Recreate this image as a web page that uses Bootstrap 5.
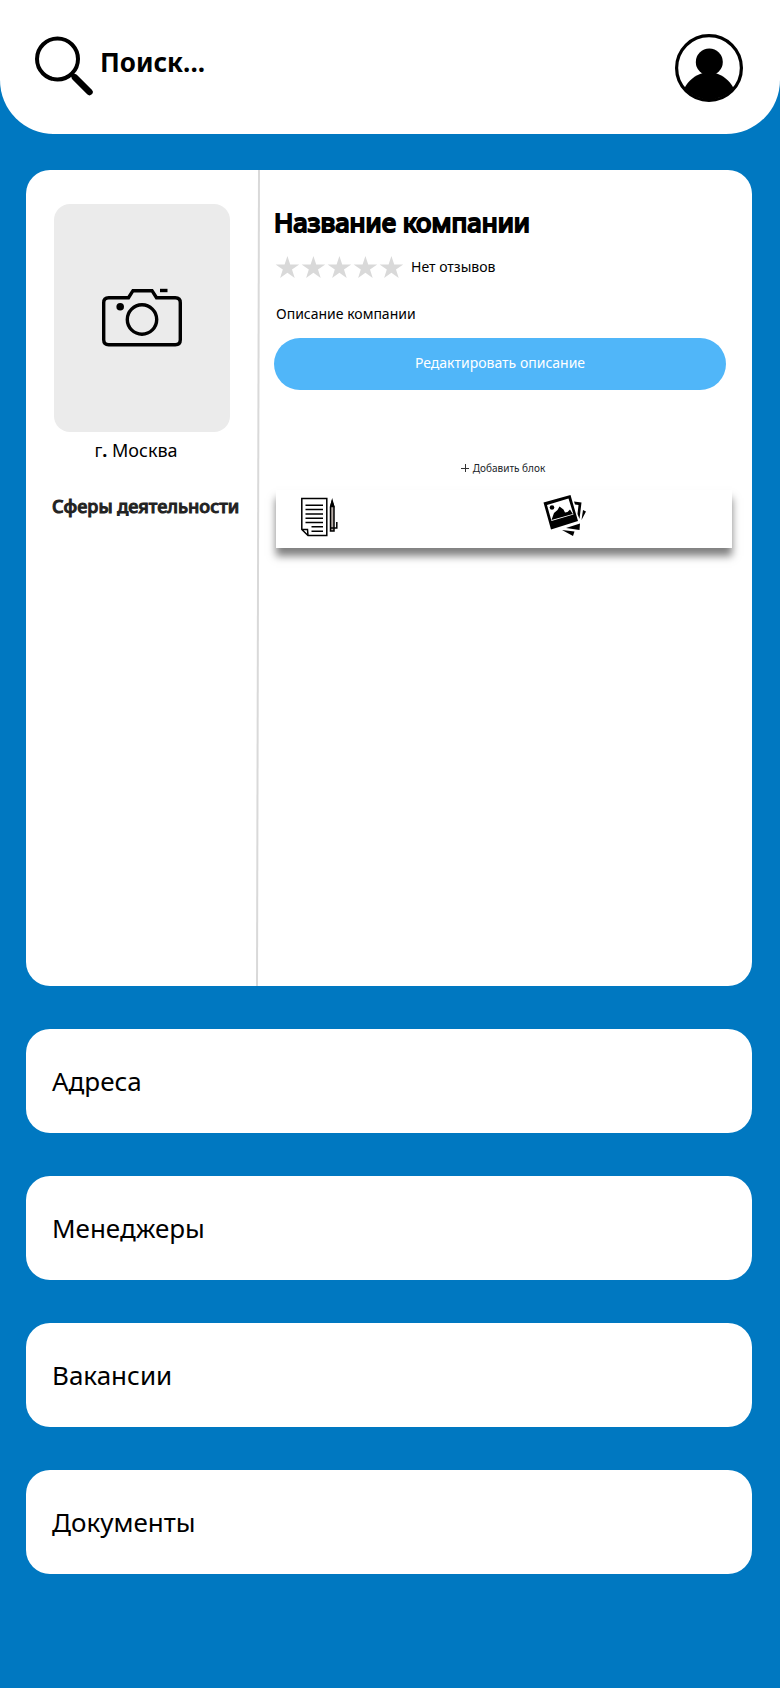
<!DOCTYPE html>
<html lang="ru">
<head>
<meta charset="utf-8">
<meta name="viewport" content="width=device-width, initial-scale=1">
<title>Профиль компании</title>
<link href="https://cdn.jsdelivr.net/npm/bootstrap@5.3.0/dist/css/bootstrap.min.css" rel="stylesheet">
<style>
body { background: #0078c1; color: #000; font-family: "Noto Sans", sans-serif; font-size: 14px; line-height: 20px; }
.top-bar { border-radius: 0 0 54px 54px; padding: 34px 37px 32px 34px; }
.search-input, .search-input:focus { font-size: 26px; line-height: 36px; font-weight: 700; color: #000; background: transparent; box-shadow: none; }
.search-input::placeholder { color: #000; opacity: 1; }
.search-form { gap: 6px; }
.page-body { padding: 36px 28px 114px 26px; }
.stack { gap: 43px; }
.panel { border-radius: 24px; }
.profile { min-height: 816px; }
.side { flex: 0 0 230px; padding: 34px 0 0 28px; }
.photo { width: 176px; height: 228px; background: #ebebeb; border-radius: 16px; }
.city, .spheres { font-size: 18px; line-height: 24px; }
.city { width: 164px; margin-top: 6px; }
.spheres { margin: 32px 0 0 -2px; -webkit-text-stroke: 1px #222; color: #222; white-space: nowrap; }
.divider { flex: 0 0 4px; background: #d9d9d9; clip-path: polygon(2px 0, 100% 0, 2px 100%, 0 100%); }
.details { padding: 34px 20px 24px 14px; }
.company { font-size: 26px; line-height: 36px; font-weight: 400; -webkit-text-stroke: 2px #000; }
.rating { margin: 15px 0 0 1px; gap: 6px; }
.about { margin: 25px 0 14px 2px; }
.edit-btn, .edit-btn:hover { background: #50b6f9; color: #fff; font-size: 14px; line-height: 20px; height: 52px; margin-right: 6px; padding-bottom: 8px; }
.add-btn { font-size: 10px; line-height: 14px; margin-top: 71px; }
.tools { margin: 15px 0 0 2px; height: 58px; padding: 0 24px 4px; box-shadow: 0 8px 8px rgba(0,0,0,.5); }
.images-btn { margin-left: 39px; padding-bottom: 3px; }
.section-link { font-size: 26px; line-height: 36px; padding: 34px 26px; color: #000; }
</style>
</head>
<body>
<header class="top-bar bg-white d-flex justify-content-between align-items-center">
  <form class="search-form d-flex align-items-center flex-grow-1 mb-1" role="search">
    <button class="btn p-0 border-0 d-flex" type="submit" aria-label="Найти">
      <svg width="60" height="62" viewBox="0 0 60 62" fill="none" stroke="#000" stroke-linecap="round"><circle cx="23.500" cy="24" r="20.500" stroke-width="4"/><path d="M38 39.500 40 41.500" stroke-width="4"/><path d="M41 42.500 55.500 57" stroke-width="6.500"/></svg>
    </button>
    <input class="form-control search-input border-0 p-0 mb-2" type="search" placeholder="Поиск..." aria-label="Поиск">
  </form>
  <a href="#" class="d-flex" aria-label="Профиль">
    <svg width="68" height="68" viewBox="0 0 68 68"><circle cx="34" cy="34" r="32.400" fill="#fff" stroke="#000" stroke-width="3.200"/><circle cx="34.300" cy="28" r="13.500"/><path d="M9.500 54C13 47 20 41 28 39H40C48 41 55 47 58.500 54A32 32 0 0 1 9.500 54Z"/></svg>
  </a>
</header>

<main class="page-body d-flex flex-column stack">
  <section class="panel profile bg-white d-flex">
    <aside class="side">
      <button type="button" class="photo btn border-0 p-0 d-flex align-items-center justify-content-center" aria-label="Добавить фото">
        <svg width="80" height="80" viewBox="0 0 80 80" fill="none" stroke="#000" stroke-width="3.400"><path d="M6.700 19.700H26.500L31 12.700H50L54.500 19.700H73.300Q78.300 19.700 78.300 24.700V61.800Q78.300 66.800 73.300 66.800H6.700Q1.700 66.800 1.700 61.800V24.700Q1.700 19.700 6.700 19.700Z"/><circle cx="40" cy="41.500" r="14.700"/><circle cx="18.200" cy="28.800" r="3.800" fill="#000" stroke="none"/><path d="M58 12.500H65.500"/></svg>
      </button>
      <div class="city text-center">г<b>.</b> Москва</div>
      <h2 class="spheres">Сферы деятельности</h2>
    </aside>
    <div class="divider"></div>
    <div class="details flex-grow-1 d-flex flex-column">
      <h1 class="company mb-0">Название компании</h1>
      <div class="rating d-flex align-items-center">
        <svg width="130" height="24" viewBox="0 0 130 24" fill="#d9d9d9"><defs><path id="star" d="M12.400 1 15.200 9.400H24.200L17 14.500 19.700 23 12.400 17.800 5.100 23 7.800 14.500.600 9.400H9.600Z"/></defs><use href="#star"/><use href="#star" x="26"/><use href="#star" x="52"/><use href="#star" x="78"/><use href="#star" x="104"/></svg>
        <span>Нет отзывов</span>
      </div>
      <p class="about">Описание компании</p>
      <button type="button" class="btn edit-btn border-0 rounded-pill">Редактировать описание</button>
      <button type="button" class="btn add-btn border-0 p-0 align-self-center d-flex align-items-center gap-1"><svg width="8" height="8" viewBox="0 0 8 8" stroke="#333" stroke-width="1"><path d="M0 4.500H8M4.500 0V8"/></svg>Добавить блок</button>
      <div class="tools row gx-0 align-items-center">
        <div class="col">
          <button type="button" class="btn border-0 p-0 d-flex" aria-label="Текстовый блок">
            <svg width="38" height="40" viewBox="0 0 38 40" fill="none" stroke="#000" stroke-width="1.500"><path d="M1.800 1.500H26.800V38.500H8L1.800 32.500ZM1.800 32.500H7.500L8 38.500"/><path d="M5.500 8.200H23M5.500 12.600H23M5.500 16.900H23M5.500 21.200H23M5.500 25.500H23M11.500 29.800H23M11.500 34.200H23"/><path d="M30.500 10 32 5 34 10V34H30.500ZM30.500 31H34" fill="#b5aaa4"/><path d="M30.800 9.500 32.200 4 33.700 9.500Z" fill="#000"/><path d="M34 31H36.800V25"/></svg>
          </button>
        </div>
        <div class="col">
          <button type="button" class="images-btn btn border-0 px-0 pt-0 d-flex" aria-label="Блок с изображениями">
            <svg width="44" height="44" viewBox="0 0 44 44"><path fill-rule="evenodd" d="M.500 8.500 27.500 1 35 27 8 35.500ZM4 11 8.500 27 30.500 20.500 25.500 4.500Z"/><circle cx="9" cy="13.500" r="2.300"/><path d="M8.500 26 11 19 14.500 16 16.500 12.500 20.500 15.500 22 18.500 24.500 18 27 15.500 29.800 20Z"/><path d="M31 7.500 38.500 8.500 36.500 25 34.500 20 35.500 11 32 10.500ZM40 16 43 17.500 38.500 26ZM23 34 37 29.500 36.500 36ZM19 36 31.500 37.500 30 42Z"/></svg>
          </button>
        </div>
      </div>
    </div>
  </section>
  <a href="#" class="section-link panel bg-white text-decoration-none">Адреса</a>
  <a href="#" class="section-link panel bg-white text-decoration-none">Менеджеры</a>
  <a href="#" class="section-link panel bg-white text-decoration-none">Вакансии</a>
  <a href="#" class="section-link panel bg-white text-decoration-none">Документы</a>
</main>
<script src="https://cdn.jsdelivr.net/npm/bootstrap@5.3.0/dist/js/bootstrap.bundle.min.js"></script>
</body>
</html>
